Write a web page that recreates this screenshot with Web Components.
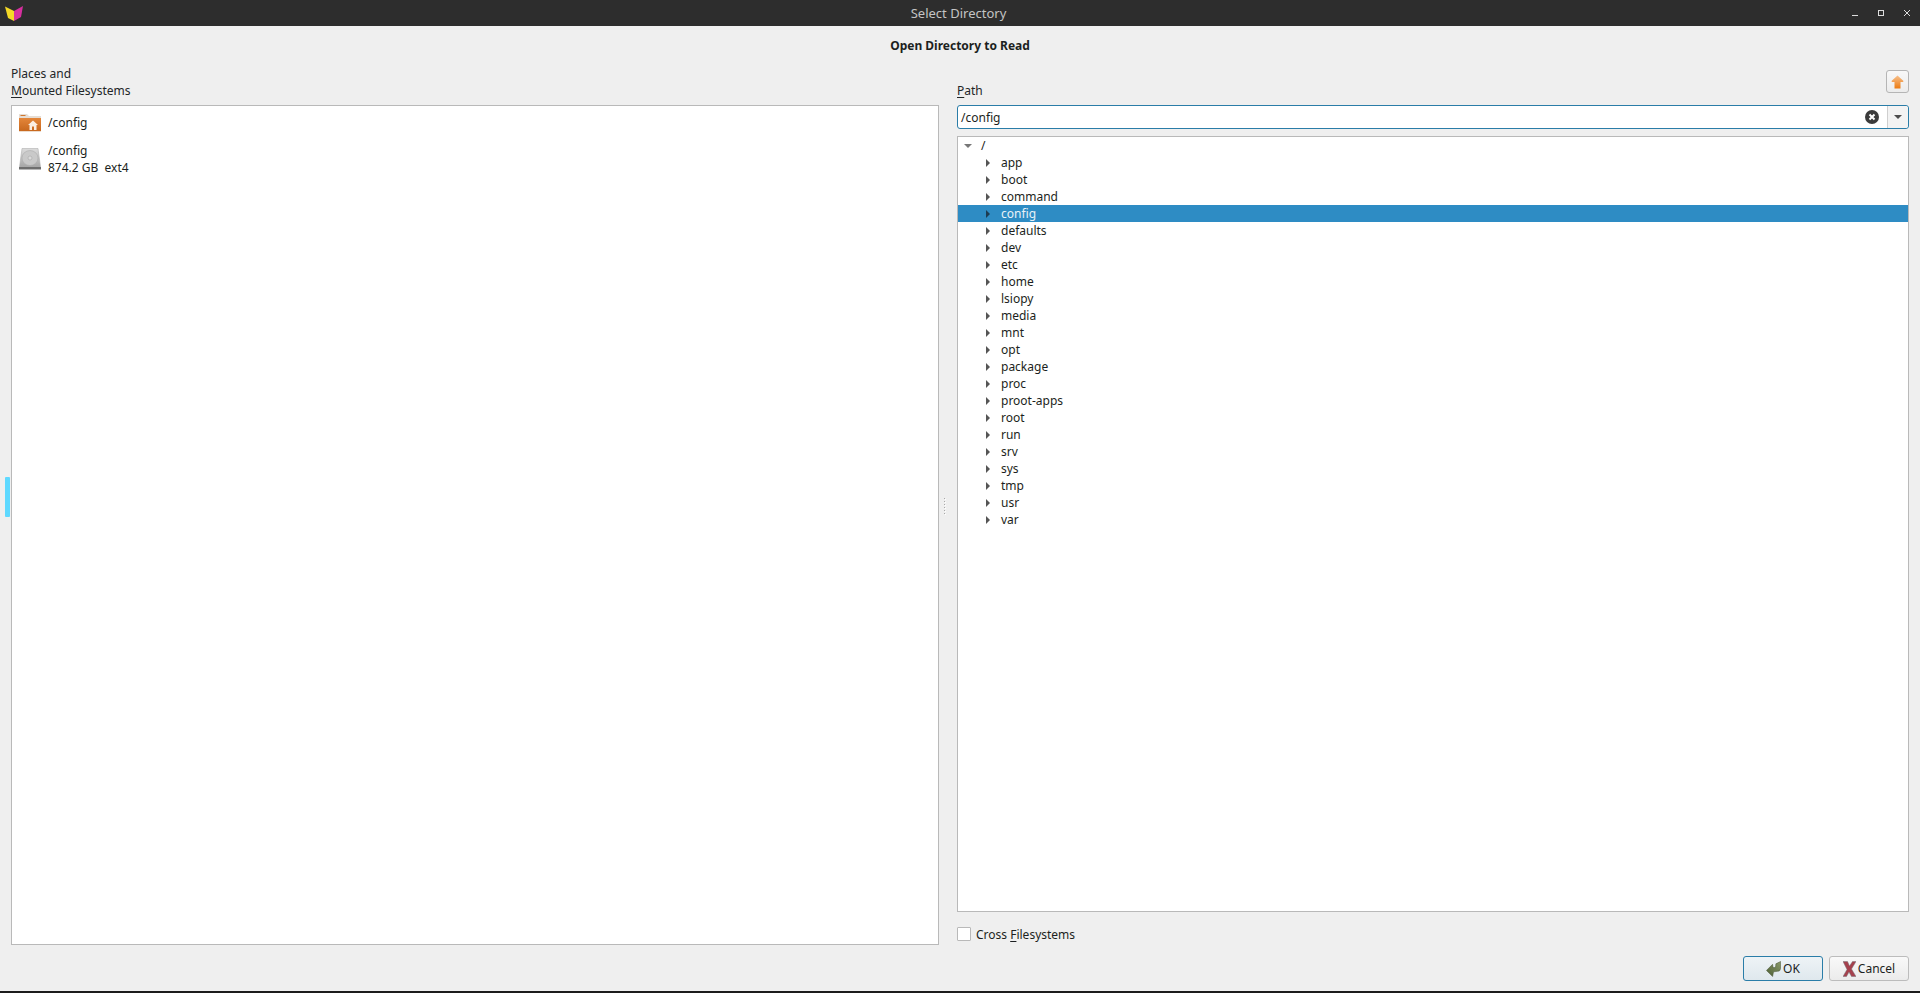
<!DOCTYPE html>
<html><head><meta charset="utf-8">
<style>
html,body{margin:0;height:993px;overflow:hidden;background:#efefef;font:12px/17px "Noto Sans",sans-serif;color:#232627}
</style></head><body>
<app-window></app-window>
<template id="t-titlebar"><style>
:host{display:flex;align-items:center;height:26px;background:#2d2d2d;color:#c4c4c4;flex:none;position:relative}
.logo{margin-left:5px;width:18px;height:15px;flex:none}
.title{flex:1;text-align:center;padding-right:3px;font-size:13px;margin-left:-23px}
.btns{display:flex;position:absolute;right:0;top:0;height:26px;align-items:center}
.btns svg{width:26px;height:26px;display:block}
</style>
<svg class="logo" viewBox="0 0 18 15"><path d="M0 .5 L9 5 L9 15 L3 12 Z" fill="#f4d926"/><path d="M18 0 L9 5 L9 15 L16 11 Z" fill="#d62f9f"/></svg>
<span class="title"><slot></slot></span>
<div class="btns">
<svg viewBox="0 0 26 26"><path d="M10 15.500h6" stroke="#ddd" stroke-width="1" fill="none"/></svg>
<svg viewBox="0 0 26 26"><rect x="10.500" y="10.500" width="5" height="5" stroke="#ddd" stroke-width="1" fill="none"/></svg>
<svg viewBox="0 0 26 26"><path d="M10 10l6 6M16 10l-6 6" stroke="#ddd" stroke-width="1" fill="none"/></svg>
</div></template>

<template id="t-window"><style>
:host{display:flex;flex-direction:column;height:993px;box-sizing:border-box;border-bottom:2px solid #1c1c1c;position:relative}
.heading{text-align:center;font-weight:700;font-size:12px;height:36px;line-height:40px;flex:none;color:#1c1f21}
.main{flex:1;display:grid;grid-template-columns:928px 1fr;column-gap:18px;padding:0 11px;min-height:0}
.col{display:flex;flex-direction:column;min-height:0}
.lbl{height:43px;flex:none;display:flex;align-items:flex-end;line-height:17px}
.lbl>div{padding-bottom:6px}
.rlbl{display:flex;justify-content:space-between;align-items:flex-end;height:43px;flex:none}
.rlbl span{padding-bottom:6px}
.gap{height:7px;flex:none}
u{text-underline-offset:2px}
.foot{height:46px;flex:none;display:flex;justify-content:flex-end;gap:6px;padding:11px 11px 0 0;align-items:flex-start;box-sizing:border-box}
.pad{height:33px;flex:none;display:flex;align-items:flex-end}
.grip{position:absolute;left:5px;top:477px;width:5px;height:40px;background:#5fd9ff;border-radius:1px}
.split{position:absolute;left:944px;top:498px;display:flex;flex-direction:column;gap:2px}
.split i{display:block;width:1px;height:1px;background:#a8a8a8;box-shadow:1px 1px #fff}
</style>
<title-bar>Select Directory</title-bar>
<div class="heading">Open Directory to Read</div>
<div class="main">
 <div class="col">
  <div class="lbl"><div>Places and<br><u>M</u>ounted Filesystems</div></div>
  <places-list></places-list>
 </div>
 <div class="col">
  <div class="rlbl"><span><u>P</u>ath</span><tool-button></tool-button></div>
  <path-input>/config</path-input>
  <div class="gap"></div>
  <dir-tree></dir-tree>
  <div class="pad"><check-box>Cross <u>F</u>ilesystems</check-box></div>
 </div>
</div>
<div class="foot">
<push-button primary><svg slot="icon" viewBox="0 0 16 17"><defs><linearGradient id="ok" x1="1" y1="0" x2="0" y2="1"><stop offset="0" stop-color="#8a9a6a"/><stop offset="1" stop-color="#4d5f35"/></linearGradient></defs><path d="M15.500 .5 L15.500 8 Q15.500 11 12 11 L8 11.500 L7 16.500 L.5 10 L7 3.500 L7.500 7 L10 7 Q10.500 4 10.500 3 Z" fill="url(#ok)" stroke="#3e4c2a" stroke-width=".5"/></svg>OK</push-button>
<push-button><svg slot="icon" viewBox="0 0 13 16"><path d="M0 .5 L4.500 .5 L6.500 5 L9.500 .5 L13 .5 L8.500 8 L13 15.500 L8.500 15.500 L6 11 L3.500 15.500 L0 15.500 L4 8.500 Z" fill="#a5414d" stroke="#77757a" stroke-width=".5"/></svg>Cancel</push-button>
</div>
<div class="grip"></div>
<div class="split"><i></i><i></i><i></i><i></i><i></i><i></i></div>
</template>

<template id="t-places"><style>
:host{display:block;flex:1;background:#fff;border:1px solid #b9b9b9;box-sizing:border-box;min-height:0;padding-top:4px}
.row{display:flex;align-items:center;padding-left:7px;gap:7px;color:#1c1f21}
.r1{height:25px}
.r2{height:40px;margin-top:4px}
svg{width:22px;height:22px;flex:none}
</style>
<div class="row r1"><svg viewBox="0 0 22 22"><defs><linearGradient id="fo" x1="0" y1="0" x2="0" y2="1"><stop offset="0" stop-color="#e4863a"/><stop offset="1" stop-color="#c8681e"/></linearGradient></defs><path d="M0 2h8l2 2h12v2H0z" fill="#e6ddd4"/><rect x="1.500" y="3" width="5" height="1" fill="#d0782f"/><path d="M0 6h22v13H0z" fill="url(#fo)"/><path d="M0 19h22v1H0z" fill="#ecdccd"/><path d="M14 8.500l5 4.500h-1.500v5H15v-3.500h-2V18h-2.500v-5H9z" fill="#fbeee2"/></svg><span>/config</span></div>
<div class="row r2"><svg viewBox="0 0 22 22"><defs><linearGradient id="hd" x1="0" y1="0" x2="0" y2="1"><stop offset="0" stop-color="#dcdcdc"/><stop offset="1" stop-color="#a6a6a6"/></linearGradient></defs><path d="M3 .5h16l2.500 18.500H.5z" fill="url(#hd)" stroke="#b0b0b0" stroke-width=".6"/><ellipse cx="11" cy="10" rx="8" ry="7.500" fill="#c9c9c9" stroke="#a9a9a9" stroke-width=".5"/><circle cx="11" cy="10" r="2" fill="#dadada" stroke="#a0a0a0" stroke-width=".5"/><path d="M0 19h22v2.500H0z" fill="#6e6e6e"/></svg><span>/config<br>874.2 GB&nbsp; ext4</span></div>
</template>

<template id="t-tool"><style>
:host{display:flex;align-items:center;justify-content:center;width:23px;height:23px;box-sizing:border-box;border:1px solid #b5b5b5;border-radius:3px;background:linear-gradient(#f8f8f8,#ececec);margin-bottom:12px}
svg{width:13px;height:14px}
</style><svg viewBox="0 0 13 14"><defs><linearGradient id="up" x1="0" y1="0" x2="0" y2="1"><stop offset="0" stop-color="#f7c08c"/><stop offset="1" stop-color="#ec7a10"/></linearGradient></defs><path d="M6.500 0.500 L12.500 6 Q12.500 7 11.500 7 L9.500 7 L9.500 13.500 L3.500 13.500 L3.500 7 L1.500 7 Q.5 7 .5 6 Z" fill="url(#up)"/></svg></template>

<template id="t-input"><style>
:host{display:flex;height:24px;box-sizing:border-box;border:1px solid #2a7da8;border-radius:3px;background:#fff;flex:none;align-items:center;color:#1c1f21}
.text{flex:1;padding-left:3px}
.clr{width:14px;height:14px;margin-right:8px}
.dd{width:20px;align-self:stretch;border-left:1px solid #cfcfcf;background:#f3f3f3;border-radius:0 3px 3px 0;display:flex;align-items:center;justify-content:center}
.dd i{display:block;border:solid transparent;border-width:4px 4px 0;border-top-color:#4d4d4d}
</style><div class="text"><slot></slot></div>
<svg class="clr" viewBox="0 0 14 14"><circle cx="7" cy="7" r="7" fill="#3b3b3b"/><path d="M4.500 4.500l5 5M9.500 4.500l-5 5" stroke="#fff" stroke-width="2"/></svg>
<div class="dd"><i></i></div></template>

<template id="t-tree"><style>
:host{display:block;flex:1;background:#fff;border:1px solid #b9b9b9;box-sizing:border-box;min-height:0}
</style><slot></slot></template>

<template id="t-item"><style>
:host{display:flex;height:17px;align-items:center;color:#1c1f21}
:host([sel]){background:#2e8cc4;color:#e9f2f8}
.arrow{width:0;height:0;flex:none;border:solid transparent}
:host(:not([root])) .arrow{margin-left:28px;margin-right:11px;border-width:4px 0 4px 4px;border-left-color:#555}
:host([sel]) .arrow{border-left-color:#1d3c52 !important}
:host([root]) .arrow{margin-left:6px;margin-right:9px;border-width:4px 4px 0;border-top-color:#777}
</style><span class="arrow"></span><span><slot></slot></span></template>

<template id="t-check"><style>
:host{display:flex;align-items:center;gap:5px;height:14px;color:#1c1f21;margin-bottom:4px}
i{display:block;width:14px;height:14px;border:1px solid #b9b9b9;background:#fff;box-sizing:border-box;border-radius:1px}
</style><i></i><span><slot></slot></span></template>

<template id="t-btn"><style>
:host{display:flex;align-items:center;justify-content:center;width:80px;height:25px;box-sizing:border-box;border:1px solid #bcbcbc;border-radius:3px;background:linear-gradient(#f9f9f9,#ebebeb);color:#1c1f21}
:host([primary]){border-color:#2a7da8;background:linear-gradient(#eef3f6,#dfe8ed)}
::slotted(svg){height:16px;width:auto;margin-right:2px}
</style><slot name="icon"></slot><slot></slot></template>

<script>
function def(name,tid,extra){
  customElements.define(name,class extends HTMLElement{
    constructor(){super();this.attachShadow({mode:'open'}).appendChild(document.getElementById(tid).content.cloneNode(true));}
    connectedCallback(){if(extra)extra(this);}
  });
}
def('title-bar','t-titlebar');
def('places-list','t-places');
def('tool-button','t-tool');
def('path-input','t-input');
def('tree-item','t-item');
def('check-box','t-check');
def('push-button','t-btn');
def('dir-tree','t-tree',function(el){
  if(el.childElementCount)return;
  var names=['app','boot','command','config','defaults','dev','etc','home','lsiopy','media','mnt','opt','package','proc','proot-apps','root','run','srv','sys','tmp','usr','var'];
  var r=document.createElement('tree-item');r.setAttribute('root','');r.textContent='/';el.appendChild(r);
  names.forEach(function(n){var i=document.createElement('tree-item');i.textContent=n;if(n==='config')i.setAttribute('sel','');el.appendChild(i);});
});
def('app-window','t-window');
</script>
</body></html>
